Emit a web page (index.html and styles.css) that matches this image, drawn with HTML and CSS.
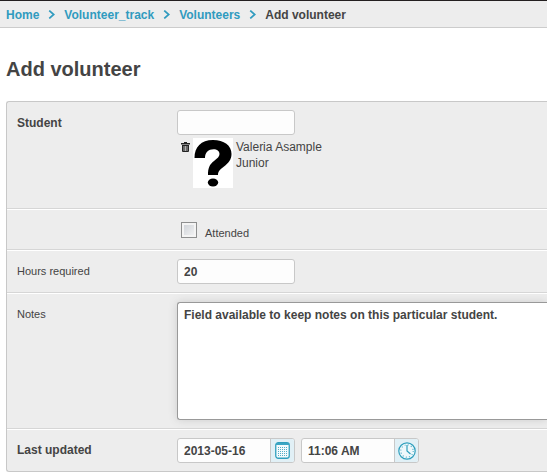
FILE: index.html
```html
<!DOCTYPE html>
<html lang="en">
<head>
<meta charset="utf-8">
<title>Add volunteer</title>
<link rel="stylesheet" href="styles.css">
</head>
<body>
<nav class="breadcrumbs" aria-label="Breadcrumb">
  <a href="#">Home</a>
  <svg class="sep" viewBox="0 0 6 8"><path d="M1 .5 5 4 1 7.500"/></svg>
  <a href="#">Volunteer_track</a>
  <svg class="sep" viewBox="0 0 6 8"><path d="M1 .5 5 4 1 7.500"/></svg>
  <a href="#">Volunteers</a>
  <svg class="sep" viewBox="0 0 6 8"><path d="M1 .5 5 4 1 7.500"/></svg>
  <span>Add volunteer</span>
</nav>
<main>
  <h1>Add volunteer</h1>
  <form class="panel">
    <div class="row row-student">
      <label class="name required" for="student">Student</label>
      <div class="field">
        <input class="text" id="student" type="text">
        <div class="picked">
          <button class="remove" type="button" aria-label="Remove student">
            <svg viewBox="0 0 9 10"><path fill="#222" d="M3 0h3v1h3v1.400H0V1h3zM1 3h7v6q0 1-1 1H2Q1 10 1 9z"/><path stroke="#ededed" stroke-width=".7" d="M3 4v5M4.500 4v5M6 4v5"/></svg>
          </button>
          <svg class="photo" viewBox="0 0 40 50"><path fill="#fff" d="M0 0h40v50H0z"/><path fill="#000" d="M1.500 20C1.500 9 8 2 20 2c11 0 18.500 5.500 18.500 14 0 5.500-3 9-7.500 12.500-4.500 3.500-6 5-6 8.500h-10c0-7 1.500-10.500 6-14 3.500-2.700 5.500-4.500 5.500-7 0-3-2.500-4.700-6-4.700-5 0-8.500 3-8.500 8.700z"/><ellipse cx="20" cy="44.500" rx="5.200" ry="4"/></svg>
          <div class="who">Valeria Asample<br>Junior</div>
        </div>
      </div>
    </div>
    <div class="row row-attended">
      <div class="name"></div>
      <div class="field check">
        <input id="attended" type="checkbox">
        <label for="attended">Attended</label>
      </div>
    </div>
    <div class="row">
      <label class="name" for="hours">Hours required</label>
      <div class="field"><input class="text" id="hours" type="text" value="20"></div>
    </div>
    <div class="row row-notes">
      <label class="name" for="notes">Notes</label>
      <div class="field"><textarea id="notes">Field available to keep notes on this particular student.</textarea></div>
    </div>
    <div class="row">
      <label class="name required" for="date">Last updated</label>
      <div class="field pair">
        <div class="picker">
          <input id="date" type="text" value="2013-05-16">
          <button type="button" aria-label="Choose date">
            <svg width="15" height="17" viewBox="0 0 15 17"><rect x=".75" y=".75" width="13.500" height="15.500" rx="2.500" fill="#f4fafc" stroke="#2f9fbd" stroke-width="1.300"/><path fill="#3aa5c3" d="M1 1h13v2H1z"/><path stroke="#54aec8" stroke-dasharray="1 1" d="M3 5.500h9M3 7.500h9M3 9.500h9M3 11.500h9M3 13.500h9"/></svg>
          </button>
        </div>
        <div class="picker">
          <input type="text" value="11:06 AM" aria-label="Time updated">
          <button type="button" aria-label="Choose time">
            <svg width="18" height="18" viewBox="0 0 18 18"><circle cx="9" cy="9" r="8.200" fill="#eef8fb" stroke="#2f9fbd" stroke-width="1.200"/><circle cx="9" cy="9" r="6.200" fill="none" stroke="#54aec8" stroke-width="1.200" stroke-dasharray="1 2.246"/><path fill="none" stroke="#2f9fbd" stroke-width="1.200" d="M9 3v6l3.500 3"/></svg>
          </button>
        </div>
      </div>
    </div>
  </form>
</main>
</body>
</html>
```
FILE: styles.css
```css
* { box-sizing: border-box; }

body {
  margin: 0;
  background: #fff;
  color: #444;
  font: 12px/16px "Liberation Sans", Arial, sans-serif;
}

input, textarea, button { font: inherit; color: inherit; margin: 0; }

.breadcrumbs {
  display: flex;
  align-items: center;
  gap: 9px;
  height: 28px;
  padding: 1px 6px 0;
  border-top: 1px solid #231f20;
  border-bottom: 1px solid #ccc;
  background: #ededed;
  font-weight: bold;
  white-space: nowrap;
}

.breadcrumbs a { color: #309bbf; text-decoration: none; }

.sep {
  width: 7px;
  height: 9px;
  fill: none;
  stroke: #309bbf;
  stroke-width: 1.5;
}

main { padding-left: 6px; }

h1 {
  margin: 0;
  padding: 29px 0 20px;
  font-size: 20px;
  line-height: 24px;
}

.panel {
  border: 1px solid #c8c8c8;
  border-right: 0;
  border-radius: 3px 0 0 3px;
  background: #ededed;
}

.row {
  display: flex;
  min-height: 43px;
  padding: 8px 0 8px 10px;
  border-top: 1px solid #fff;
  border-bottom: 1px solid #d6d6d6;
}

.row:first-child { border-top: 0; }
.row:last-child { border-bottom: 0; min-height: 42px; }

.row-student { min-height: 107px; }
.row-attended { min-height: 41px; padding-bottom: 0; }
.row-notes { min-height: 136px; }

.name {
  flex: 0 0 160px;
  padding-top: 4px;
  font-size: 11px;
}

.required { font-size: 12px; font-weight: bold; }
.row-student .name { padding-top: 5px; }

.field { flex: 1; min-width: 0; }

.text, .picker {
  display: block;
  width: 118px;
  height: 25px;
  border: 1px solid #c8c8c8;
  border-radius: 3px;
  background: #fdfdfd;
}

.text { padding: 0 6px; font-weight: bold; }

.picked {
  display: flex;
  padding: 3px 0 0 4px;
}

.remove {
  display: flex;
  width: 12px;
  height: 18px;
  padding: 4px 0 0;
  border: 0;
  background: none;
}

.remove svg { width: 9px; height: 10px; }
.photo { width: 40px; height: 50px; }
.who { padding-left: 3px; padding-top: 1px; }

.check {
  display: flex;
  align-items: flex-start;
  gap: 8px;
  padding: 4px;
  font-size: 11px;
}

.check input {
  appearance: none;
  width: 16px;
  height: 16px;
  border: 1px solid #8e8f8f;
  background: linear-gradient(135deg, #cbcfd5, #f6f6f6);
  box-shadow: inset 0 0 0 2px #f4f4f4;
}

.check label { padding-top: 3px; }

textarea {
  display: block;
  width: 100%;
  height: 118px;
  padding: 4px 6px;
  border: 1px solid #999;
  border-right: 0;
  border-radius: 3px 0 0 3px;
  background: #fff;
  box-shadow: 0 0 8px #ccc;
  font-weight: bold;
  resize: none;
}

.pair { display: flex; gap: 6px; }

.picker { display: flex; overflow: hidden; }

.picker input {
  flex: 1;
  min-width: 0;
  padding: 0 6px;
  border: 0;
  background: none;
  font-weight: bold;
}

.picker button {
  display: flex;
  align-items: center;
  justify-content: center;
  width: 24px;
  padding: 0;
  border: 0;
  border-left: 1px solid #c8c8c8;
  background: #e1f0f6;
}
```
